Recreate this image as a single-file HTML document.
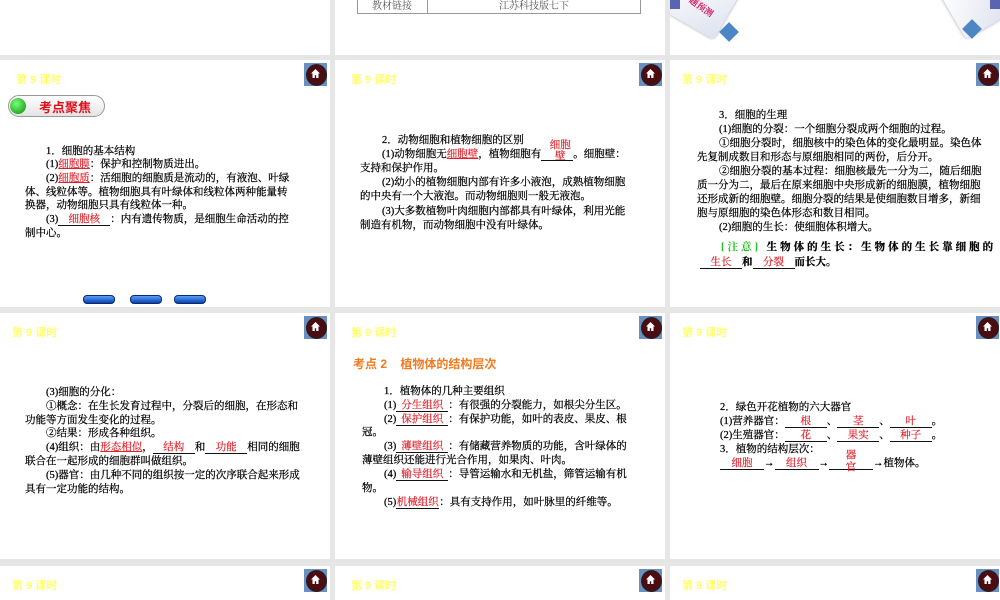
<!DOCTYPE html>
<html><head><meta charset="utf-8"><style>
*{margin:0;padding:0;box-sizing:border-box}
html,body{width:1000px;height:600px}
body{background:#e6e6e6;position:relative;overflow:hidden;font-family:"Liberation Serif","Noto Serif CJK SC",serif;color:#000}
.p{position:absolute;background:#fff;overflow:hidden}
.t{position:absolute;font-family:"Liberation Sans","Noto Sans CJK SC",sans-serif;font-size:11px;font-weight:bold;color:#ffff70}
.h{position:absolute;width:23px;height:23px;background:#6a8fc0}
.h:before{content:"";position:absolute;left:2px;top:1px;width:19px;height:20px;border-radius:50%;background:#4a0d12;border:1px solid #222}
.h svg{position:absolute;left:6px;top:5px}
.l{position:absolute;font-size:10.5px;white-space:nowrap;line-height:13px;-webkit-text-stroke:0.25px #000}
.r{color:#e0202a;text-decoration:underline;-webkit-text-stroke:0.2px #e0202a}
.b{display:inline-block;border-bottom:1px solid #111;text-align:center;color:#e0202a;line-height:11px;-webkit-text-stroke:0.2px #e0202a}
.btn{position:absolute;width:32px;height:9px;border-radius:4px;background:linear-gradient(#5aa0ff,#0a3fa8);border:1px solid #0a2a70}
</style></head><body>

<!-- row 1 -->
<div class="p" style="left:0;top:0;width:330px;height:55px"></div>
<div class="p" style="left:335px;top:0;width:330px;height:55px">
 <div style="position:absolute;left:22px;top:-1px;width:284px;height:15px;border:1px solid #999;border-top:none"></div>
 <div style="position:absolute;left:92px;top:0;width:1px;height:14px;background:#999"></div>
 <div class="l" style="left:22px;top:0;width:70px;text-align:center;color:#555;font-size:10px;-webkit-text-stroke:0">教材链接</div>
 <div class="l" style="left:92px;top:0;width:214px;text-align:center;color:#555;font-size:10px;-webkit-text-stroke:0">江苏科技版七下</div>
</div>
<div class="p" style="left:670px;top:0;width:330px;height:55px">
 <div style="position:absolute;left:8px;top:-22px;width:52px;height:52px;background:linear-gradient(135deg,#fff,#dde2ee);transform:rotate(30deg);border-radius:4px;box-shadow:0 0 3px #99a"></div>
 <div style="position:absolute;left:0;top:-5px;width:10px;height:14px;background:#5a64b0"></div>
 <div style="position:absolute;left:18px;top:0;font-size:9px;color:#d0105a;font-weight:bold;transform:rotate(35deg)">题预测</div>
 <div style="position:absolute;left:52px;top:25px;width:14px;height:14px;background:#4c86c4;transform:rotate(45deg)"></div>
 <div style="position:absolute;left:280px;top:-20px;width:50px;height:50px;background:linear-gradient(135deg,#fff,#dde2ee);transform:rotate(-30deg);border-radius:4px;box-shadow:0 0 3px #99a"></div>
 <div style="position:absolute;left:320px;top:-5px;width:10px;height:14px;background:#5a64b0"></div>
 <div style="position:absolute;left:295px;top:22px;width:14px;height:14px;background:#4c86c4;transform:rotate(45deg)"></div>
</div>

<!-- row 2 -->
<div class="p" style="left:0;top:60px;width:330px;height:247px">
 <div class="t" style="left:16px;top:11px">第 9 课时</div>
 <div class="h" style="left:304px;top:3px"><svg width="11" height="11" viewBox="0 0 11 11"><path d="M5.5 1L1 5.5h1.5V10h2.3V7.3h1.4V10h2.3V5.5H10z" fill="#fff"/></svg></div>
 <div style="position:absolute;left:8px;top:35px;width:97px;height:22px;border-radius:11px;border:1px solid #999;background:linear-gradient(#fff,#e4e4e4)"></div>
 <div style="position:absolute;left:10px;top:38px;width:16px;height:16px;border-radius:50%;background:radial-gradient(circle at 40% 35%,#7f7,#0a8a0a)"></div>
 <div style="position:absolute;left:39px;top:37px;font-family:'Liberation Sans','Noto Sans CJK SC',sans-serif;font-weight:bold;font-size:13px;color:#e0101a">考点聚焦</div>
 <div class="l" style="left:46px;top:85px">1．细胞的基本结构</div>
 <div class="l" style="left:46px;top:98px">(1)<span class="r">细胞膜</span>：保护和控制物质进出。</div>
 <div class="l" style="left:46px;top:112px">(2)<span class="r">细胞质</span>：活细胞的细胞质是流动的，有液泡、叶绿</div>
 <div class="l" style="left:25px;top:126px">体、线粒体等。植物细胞具有叶绿体和线粒体两种能量转</div>
 <div class="l" style="left:25px;top:139px">换器，动物细胞只具有线粒体一种。</div>
 <div class="l" style="left:46px;top:153px">(3)<span class="b" style="width:52px">细胞核</span>：内有遗传物质，是细胞生命活动的控</div>
 <div class="l" style="left:25px;top:167px">制中心。</div>
 <div class="btn" style="left:83px;top:235px"></div>
 <div class="btn" style="left:130px;top:235px"></div>
 <div class="btn" style="left:174px;top:235px"></div>
</div>
<div class="p" style="left:335px;top:60px;width:330px;height:247px">
 <div class="t" style="left:16px;top:11px">第 9 课时</div>
 <div class="h" style="left:304px;top:3px"><svg width="11" height="11" viewBox="0 0 11 11"><path d="M5.5 1L1 5.5h1.5V10h2.3V7.3h1.4V10h2.3V5.5H10z" fill="#fff"/></svg></div>
 <div class="l" style="left:47px;top:74px">2．动物细胞和植物细胞的区别</div>
 <div class="l" style="left:47px;top:88px">(1)动物细胞无<span class="r">细胞壁</span>，植物细胞有<span class="b" style="width:32px;position:relative"><span style="position:absolute;left:6px;top:-9px;width:26px;white-space:normal;line-height:11px">细胞壁</span>&nbsp;</span>。细胞壁：</div>
 <div class="l" style="left:25px;top:102px">支持和保护作用。</div>
 <div class="l" style="left:47px;top:116px">(2)幼小的植物细胞内部有许多小液泡，成熟植物细胞</div>
 <div class="l" style="left:25px;top:130px">的中央有一个大液泡。而动物细胞则一般无液泡。</div>
 <div class="l" style="left:47px;top:145px">(3)大多数植物叶肉细胞内部都具有叶绿体，利用光能</div>
 <div class="l" style="left:25px;top:159px">制造有机物，而动物细胞中没有叶绿体。</div>
</div>
<div class="p" style="left:670px;top:60px;width:330px;height:247px">
 <div class="t" style="left:12px;top:11px">第 9 课时</div>
 <div class="h" style="left:306px;top:3px"><svg width="11" height="11" viewBox="0 0 11 11"><path d="M5.5 1L1 5.5h1.5V10h2.3V7.3h1.4V10h2.3V5.5H10z" fill="#fff"/></svg></div>
 <div class="l" style="left:49px;top:49px">3．细胞的生理</div>
 <div class="l" style="left:49px;top:63px">(1)细胞的分裂：一个细胞分裂成两个细胞的过程。</div>
 <div class="l" style="left:49px;top:77px">①细胞分裂时，细胞核中的染色体的变化最明显。染色体</div>
 <div class="l" style="left:27px;top:91px">先复制成数目和形态与原细胞相同的两份，后分开。</div>
 <div class="l" style="left:49px;top:105px">②细胞分裂的基本过程：细胞核最先一分为二，随后细胞</div>
 <div class="l" style="left:27px;top:119px">质一分为二，最后在原来细胞中央形成新的细胞膜，植物细胞</div>
 <div class="l" style="left:27px;top:133px">还形成新的细胞壁。细胞分裂的结果是使细胞数目增多，新细</div>
 <div class="l" style="left:27px;top:147px">胞与原细胞的染色体形态和数目相同。</div>
 <div class="l" style="left:49px;top:161px">(2)细胞的生长：使细胞体积增大。</div>
 <div class="l" style="left:51px;top:181px;letter-spacing:3px;font-weight:bold"><span style="color:#20c020;-webkit-text-stroke:0">[注意]</span> 生物体的生长：生物体的生长靠细胞的</div>
 <div class="l" style="left:30px;top:196px;font-weight:bold"><span class="b" style="width:42px;font-weight:normal">生长</span>和<span class="b" style="width:42px;font-weight:normal">分裂</span>而长大。</div>
</div>

<!-- row 3 -->
<div class="p" style="left:0;top:313px;width:330px;height:246px">
 <div class="t" style="left:12px;top:11px">第 9 课时</div>
 <div class="h" style="left:304px;top:3px"><svg width="11" height="11" viewBox="0 0 11 11"><path d="M5.5 1L1 5.5h1.5V10h2.3V7.3h1.4V10h2.3V5.5H10z" fill="#fff"/></svg></div>
 <div class="l" style="left:46px;top:73px">(3)细胞的分化：</div>
 <div class="l" style="left:46px;top:87px">①概念：在生长发育过程中，分裂后的细胞，在形态和</div>
 <div class="l" style="left:25px;top:101px">功能等方面发生变化的过程。</div>
 <div class="l" style="left:46px;top:114px">②结果：形成各种组织。</div>
 <div class="l" style="left:46px;top:128px">(4)组织：由<span class="r">形态相似</span>，<span class="b" style="width:42px">结构</span>和<span class="b" style="width:42px">功能</span>相同的细胞</div>
 <div class="l" style="left:25px;top:142px">联合在一起形成的细胞群叫做组织。</div>
 <div class="l" style="left:46px;top:156px">(5)器官：由几种不同的组织按一定的次序联合起来形成</div>
 <div class="l" style="left:25px;top:170px">具有一定功能的结构。</div>
</div>
<div class="p" style="left:335px;top:313px;width:330px;height:246px">
 <div class="t" style="left:16px;top:11px">第 9 课时</div>
 <div class="h" style="left:304px;top:3px"><svg width="11" height="11" viewBox="0 0 11 11"><path d="M5.5 1L1 5.5h1.5V10h2.3V7.3h1.4V10h2.3V5.5H10z" fill="#fff"/></svg></div>
 <div style="position:absolute;left:18px;top:42px;font-family:'Liberation Sans','Noto Sans CJK SC',sans-serif;font-weight:bold;font-size:12px;color:#f07a20;white-space:pre">考点 2    植物体的结构层次</div>
 <div class="l" style="left:49px;top:72px">1．植物体的几种主要组织</div>
 <div class="l" style="left:49px;top:86px">(1)<span class="b" style="width:52px">分生组织</span>：有很强的分裂能力，如根尖分生区。</div>
 <div class="l" style="left:49px;top:100px">(2)<span class="b" style="width:52px">保护组织</span>：有保护功能，如叶的表皮、果皮、根</div>
 <div class="l" style="left:27px;top:113px">冠。</div>
 <div class="l" style="left:49px;top:127px">(3)<span class="b" style="width:52px">薄壁组织</span>：有储藏营养物质的功能，含叶绿体的</div>
 <div class="l" style="left:27px;top:141px">薄壁组织还能进行光合作用，如果肉、叶肉。</div>
 <div class="l" style="left:49px;top:155px">(4)<span class="b" style="width:52px">输导组织</span>：导管运输水和无机盐，筛管运输有机</div>
 <div class="l" style="left:27px;top:169px">物。</div>
 <div class="l" style="left:49px;top:183px">(5)<span class="b" style="width:43px">机械组织</span>：具有支持作用，如叶脉里的纤维等。</div>
</div>
<div class="p" style="left:670px;top:313px;width:330px;height:246px">
 <div class="t" style="left:12px;top:11px">第 9 课时</div>
 <div class="h" style="left:306px;top:3px"><svg width="11" height="11" viewBox="0 0 11 11"><path d="M5.5 1L1 5.5h1.5V10h2.3V7.3h1.4V10h2.3V5.5H10z" fill="#fff"/></svg></div>
 <div class="l" style="left:50px;top:88px">2．绿色开花植物的六大器官</div>
 <div class="l" style="left:50px;top:102px">(1)营养器官：<span class="b" style="width:42px">根</span>、<span class="b" style="width:42px">茎</span>、<span class="b" style="width:42px">叶</span>。</div>
 <div class="l" style="left:50px;top:116px">(2)生殖器官：<span class="b" style="width:42px">花</span>、<span class="b" style="width:42px">果实</span>、<span class="b" style="width:42px">种子</span>。</div>
 <div class="l" style="left:50px;top:130px">3．植物的结构层次：</div>
 <div class="l" style="left:50px;top:144px"><span class="b" style="width:44px">细胞</span>→<span class="b" style="width:44px">组织</span>→<span class="b" style="width:44px;position:relative"><span style="position:absolute;left:16px;top:-8px;width:12px;white-space:normal;line-height:12px">器官</span>&nbsp;</span>→植物体。</div>
</div>

<!-- row 4 -->
<div class="p" style="left:0;top:566px;width:330px;height:34px">
 <div class="t" style="left:12px;top:11px">第 9 课时</div>
 <div class="h" style="left:304px;top:3px"><svg width="11" height="11" viewBox="0 0 11 11"><path d="M5.5 1L1 5.5h1.5V10h2.3V7.3h1.4V10h2.3V5.5H10z" fill="#fff"/></svg></div>
</div>
<div class="p" style="left:335px;top:566px;width:330px;height:34px">
 <div class="t" style="left:16px;top:11px">第 9 课时</div>
 <div class="h" style="left:304px;top:3px"><svg width="11" height="11" viewBox="0 0 11 11"><path d="M5.5 1L1 5.5h1.5V10h2.3V7.3h1.4V10h2.3V5.5H10z" fill="#fff"/></svg></div>
</div>
<div class="p" style="left:670px;top:566px;width:330px;height:34px">
 <div class="t" style="left:12px;top:11px">第 9 课时</div>
 <div class="h" style="left:306px;top:3px"><svg width="11" height="11" viewBox="0 0 11 11"><path d="M5.5 1L1 5.5h1.5V10h2.3V7.3h1.4V10h2.3V5.5H10z" fill="#fff"/></svg></div>
</div>
</body></html>
